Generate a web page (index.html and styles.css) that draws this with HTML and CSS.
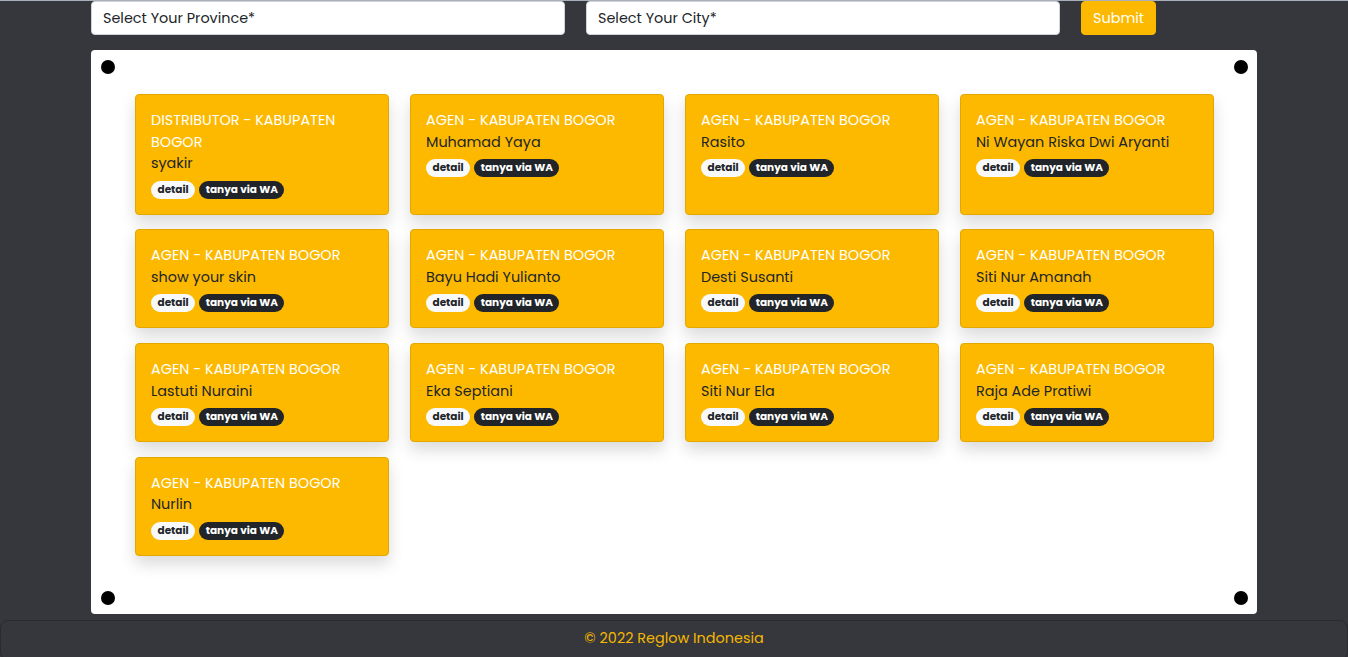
FILE: index.html
```html
<!DOCTYPE html>
<html lang="id">
<head>
<meta charset="utf-8">
<title>Reglow Indonesia - Agen</title>
<link rel="stylesheet" href="styles.css">
</head>
<body>
<div class="topline"></div>
<main class="container">
  <form class="filter">
    <select class="field"><option>Select Your Province*</option></select>
    <select class="field"><option>Select Your City*</option></select>
    <button type="button" class="btn-submit">Submit</button>
  </form>
  <section class="panel">
    <span class="dot tl"></span><span class="dot tr"></span><span class="dot bl"></span><span class="dot br"></span>
    <div class="grid">
      <div class="card"><div class="title">DISTRIBUTOR - KABUPATEN BOGOR</div><div class="name">syakir</div><div class="badges"><span class="badge light">detail</span><span class="badge dark">tanya via WA</span></div></div>
      <div class="card"><div class="title">AGEN - KABUPATEN BOGOR</div><div class="name">Muhamad Yaya</div><div class="badges"><span class="badge light">detail</span><span class="badge dark">tanya via WA</span></div></div>
      <div class="card"><div class="title">AGEN - KABUPATEN BOGOR</div><div class="name">Rasito</div><div class="badges"><span class="badge light">detail</span><span class="badge dark">tanya via WA</span></div></div>
      <div class="card"><div class="title">AGEN - KABUPATEN BOGOR</div><div class="name">Ni Wayan Riska Dwi Aryanti</div><div class="badges"><span class="badge light">detail</span><span class="badge dark">tanya via WA</span></div></div>
      <div class="card"><div class="title">AGEN - KABUPATEN BOGOR</div><div class="name">show your skin</div><div class="badges"><span class="badge light">detail</span><span class="badge dark">tanya via WA</span></div></div>
      <div class="card"><div class="title">AGEN - KABUPATEN BOGOR</div><div class="name">Bayu Hadi Yulianto</div><div class="badges"><span class="badge light">detail</span><span class="badge dark">tanya via WA</span></div></div>
      <div class="card"><div class="title">AGEN - KABUPATEN BOGOR</div><div class="name">Desti Susanti</div><div class="badges"><span class="badge light">detail</span><span class="badge dark">tanya via WA</span></div></div>
      <div class="card"><div class="title">AGEN - KABUPATEN BOGOR</div><div class="name">Siti Nur Amanah</div><div class="badges"><span class="badge light">detail</span><span class="badge dark">tanya via WA</span></div></div>
      <div class="card"><div class="title">AGEN - KABUPATEN BOGOR</div><div class="name">Lastuti Nuraini</div><div class="badges"><span class="badge light">detail</span><span class="badge dark">tanya via WA</span></div></div>
      <div class="card"><div class="title">AGEN - KABUPATEN BOGOR</div><div class="name">Eka Septiani</div><div class="badges"><span class="badge light">detail</span><span class="badge dark">tanya via WA</span></div></div>
      <div class="card"><div class="title">AGEN - KABUPATEN BOGOR</div><div class="name">Siti Nur Ela</div><div class="badges"><span class="badge light">detail</span><span class="badge dark">tanya via WA</span></div></div>
      <div class="card"><div class="title">AGEN - KABUPATEN BOGOR</div><div class="name">Raja Ade Pratiwi</div><div class="badges"><span class="badge light">detail</span><span class="badge dark">tanya via WA</span></div></div>
      <div class="card"><div class="title">AGEN - KABUPATEN BOGOR</div><div class="name">Nurlin</div><div class="badges"><span class="badge light">detail</span><span class="badge dark">tanya via WA</span></div></div>
    </div>
  </section>
</main>
<footer class="footer">© 2022 Reglow Indonesia</footer>
</body>
</html>
```
FILE: styles.css
```css
* { box-sizing: border-box; }
html, body { margin: 0; padding: 0; }
body {
  background: #36373c;
  font-family: "Poppins", "Inter", "Noto Sans", sans-serif;
  color: #212529;
  height: 657px;
  overflow: hidden;
}
.topline { height: 1px; background: #a9b0bc; }
.container { width: 1166px; margin: 0 auto; }
.filter {
  display: flex;
  gap: 21px;
  height: 34px;
  margin: 0 0 15px;
}
.field {
  appearance: none;
  -webkit-appearance: none;
  width: 474px;
  height: 34px;
  background: #fff;
  border: 1px solid #ced4da;
  border-radius: 4px;
  padding: 0 11px;
  font-family: inherit;
  font-size: 14.4px;
  color: #212529;
}
.btn-submit {
  width: 75px;
  height: 34px;
  background: #fdb900;
  border: 1px solid #fdb900;
  border-radius: 4px;
  color: #fff;
  font-family: inherit;
  font-size: 14.4px;
  padding: 0;
}
.panel {
  position: relative;
  background: #fff;
  border-radius: 4px;
  padding: 44px 44px 59px;
  height: 564px;
}
.dot {
  position: absolute;
  width: 14px; height: 14px;
  border-radius: 50%;
  background: #000;
}
.dot.tl { top: 10px; left: 10px; }
.dot.tr { top: 10px; right: 9px; }
.dot.bl { bottom: 9px; left: 10px; }
.dot.br { bottom: 9px; right: 9px; }
.grid {
  display: grid;
  grid-template-columns: repeat(4, 254px);
  column-gap: 21px;
  row-gap: 14.5px;
}
.card {
  background: #fdb900;
  border: 1px solid #e3a800;
  border-radius: 4px;
  padding: 15px;
  box-shadow: 0 8px 16px rgba(0,0,0,.15);
}
.title {
  color: #fff;
  font-size: 14.4px;
  font-weight: 400;
  line-height: 21.6px;
}
.name {
  font-size: 14.4px;
  font-weight: 400;
  line-height: 21.6px;
  color: #212529;
  margin-bottom: 6px;
}
.badges { display: flex; gap: 4px; }
.badge {
  display: inline-block;
  height: 18px;
  line-height: 18px;
  padding: 0 6.5px;
  border-radius: 9px;
  font-size: 10.5px;
  font-weight: 700;
}
.badge.light { background: #f8f9fa; color: #212529; }
.badge.dark { background: #212529; color: #fff; }
.footer {
  margin-top: 6px;
  height: 40px;
  border: 1px solid #2a2b30;
  border-radius: 8px;
  background: #36373c;
  color: #f5b800;
  font-size: 14.4px;
  text-align: center;
  padding-top: 7px;
}
```
